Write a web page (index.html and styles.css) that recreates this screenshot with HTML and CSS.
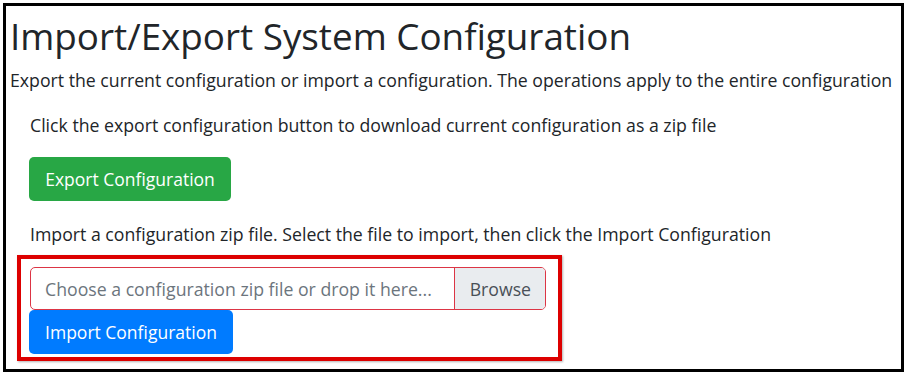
FILE: index.html
```html
<!DOCTYPE html>
<html lang="en">
<head>
  <meta charset="UTF-8" />
  <meta name="viewport" content="width=device-width, initial-scale=1.0"/>
  <title>Import/Export System Configuration</title>
  <link rel="stylesheet" href="styles.css">
</head>
<body>

  <div class="frame">
    <h1>Import/Export System Configuration</h1>
    <p class="lead-text">Export the current configuration or import a configuration. The operations apply to the entire configuration</p>

    <div class="section">
      <p>Click the export configuration button to download current configuration as a zip file</p>
      <button class="btn btn-green">Export Configuration</button>

      <p class="import-text">Import a configuration zip file. Select the file to import, then click the Import Configuration</p>
    </div>

    <!-- highlighted import area -->
    <div class="highlight">
      <div class="file-input">
        <span class="file-label">Choose a configuration zip file or drop it here...</span>
        <span class="file-browse">Browse</span>
      </div>
      <button class="btn btn-blue">Import Configuration</button>
    </div>
  </div>

</body>
</html>
```

FILE: styles.css
```css
body {
  font-family: "Open Sans", "Noto Sans", sans-serif;
  color: #212529;
  background: #fff;
  margin: 0;
  padding: 3px;
}

.frame {
  width: 891px;
  height: 363px;
  border: 3px solid #000;
  padding: 0 0 0 4px;
  box-sizing: content-box;
  overflow: hidden;
}

h1 {
  font-size: 36.8px;
  font-weight: 500;
  line-height: 44px;
  margin: 8px 0 0 0;
}

p {
  font-size: 17.7px;
  line-height: 26px;
  margin: 0;
}

.lead-text {
  margin-top: 9px;
}

.section {
  padding-left: 20px;
}

.section p {
  margin-top: 19px;
}

.btn {
  display: block;
  font-family: inherit;
  font-size: 17.5px;
  color: #fff;
  border: none;
  border-radius: 5px;
  height: 44px;
  padding: 0 16px;
  cursor: pointer;
}

.btn-green {
  background: #28a745;
  width: 202px;
  margin: 19px 0 0 -1px;
}

.btn-blue {
  background: #007bff;
  width: 204px;
  margin-left: -1px;
}

.section .import-text {
  margin-top: 20px;
}

.highlight {
  width: 516px;
  margin: 8px 0 0 7px;
  border: 4px solid #dd0000;
  padding: 8px 12px 3px 9px;
  box-shadow: 1px 1px 2px rgba(0,0,0,0.3);
}

.file-input {
  display: flex;
  height: 43px;
  border: 1px solid #dc3545;
  border-radius: 5px;
  box-sizing: border-box;
  font-size: 17.7px;
  overflow: hidden;
}

.file-label {
  flex: 1;
  display: flex;
  align-items: center;
  padding-left: 14px;
  color: #6c757d;
  white-space: nowrap;
}

.file-browse {
  display: flex;
  align-items: center;
  padding: 0 14px 0 15px;
  background: #e9ecef;
  color: #495057;
  border-left: 1px solid #dc3545;
}
```
